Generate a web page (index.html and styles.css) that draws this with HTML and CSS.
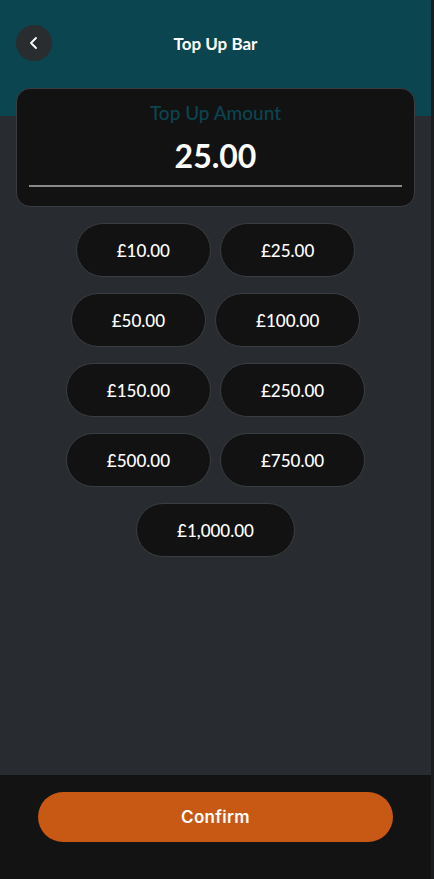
FILE: index.html
```html
<!DOCTYPE html>
<html lang="en">
<head>
    <meta charset="UTF-8">
    <meta name="viewport" content="width=device-width, initial-scale=1.0">
    <title>Top Up Bar</title>
    <link rel="stylesheet" href="styles.css">
</head>
<body>
    <div class="app">
        <div class="main">
            <header class="header">
                <button class="back" aria-label="Back">
                    <svg width="14" height="14" viewBox="0 0 14 14">
                        <path d="M9 2 L4 7 L9 12" fill="none" stroke="#fff" stroke-width="1.8" stroke-linecap="round" stroke-linejoin="round"/>
                    </svg>
                </button>
                <h1>Top Up Bar</h1>
            </header>

            <div class="amount-card">
                <div class="amount-label">Top Up Amount</div>
                <div class="amount-value" id="amount">25.00</div>
                <div class="amount-line"></div>
            </div>

            <!-- preset amounts -->
            <div class="presets">
                <button class="preset" data-value="10">£10.00</button>
                <button class="preset" data-value="25">£25.00</button>
                <button class="preset" data-value="50">£50.00</button>
                <button class="preset" data-value="100">£100.00</button>
                <button class="preset" data-value="150">£150.00</button>
                <button class="preset" data-value="250">£250.00</button>
                <button class="preset" data-value="500">£500.00</button>
                <button class="preset" data-value="750">£750.00</button>
                <button class="preset" data-value="1000">£1,000.00</button>
            </div>
        </div>

        <footer class="footer">
            <button class="confirm">Confirm</button>
        </footer>
    </div>

    <script>
        document.querySelectorAll('.preset').forEach(btn => {
            btn.addEventListener('click', function () {
                const v = Number(this.dataset.value);
                document.getElementById('amount').textContent = v.toFixed(2);
            });
        });
    </script>
</body>
</html>
```

FILE: styles.css
```css
html, body {
    margin: 0;
    padding: 0;
    height: 100%;
}

body {
    font-family: Lato, 'Noto Sans', sans-serif;
    background-color: #282c30;
    color: #fff;
}

button {
    font-family: inherit;
    cursor: pointer;
}

.app {
    display: flex;
    flex-direction: column;
    height: 100vh;
    box-sizing: border-box;
    border-right: 3px solid #1b1c1e;
}

.main {
    flex: 1;
    background: linear-gradient(to bottom, #0b4550 0, #0b4550 116px, #282c30 116px);
    padding: 25px 16px 0;
}

.header {
    display: flex;
    align-items: center;
    height: 36px;
    position: relative;
}

.back {
    width: 36px;
    height: 36px;
    border-radius: 50%;
    border: none;
    background-color: #2a2d30;
    display: flex;
    align-items: center;
    justify-content: center;
    padding: 0;
}

.header h1 {
    position: absolute;
    left: 0;
    right: 0;
    margin: 0;
    text-align: center;
    font-size: 17px;
    font-weight: 700;
    pointer-events: none;
}

.amount-card {
    margin-top: 27px;
    width: 399px;
    box-sizing: border-box;
    background-color: #121212;
    border: 1px solid #3a3d41;
    border-radius: 14px;
    padding: 13px 12px 19px;
    text-align: center;
}

.amount-label {
    color: #0b4550;
    font-size: 19px;
    font-weight: 500;
    line-height: 22px;
}

.amount-value {
    font-size: 32px;
    font-weight: 700;
    line-height: 40px;
    margin-top: 12px;
}

.amount-line {
    height: 2px;
    background-color: #8a8a8a;
    margin-top: 9px;
}

.presets {
    display: flex;
    flex-wrap: wrap;
    justify-content: center;
    gap: 16px 9px;
    margin: 16px auto 0;
    width: 310px;
}

.preset {
    height: 54px;
    padding: 0 40px;
    border-radius: 27px;
    border: 1px solid #3a3d41;
    background-color: #121212;
    color: #fff;
    font-size: 17px;
    font-weight: 500;
}

.preset:hover {
    background-color: #1a1a1a;
}

.footer {
    height: 104px;
    background-color: #131313;
    padding: 17px 38px 0;
    box-sizing: border-box;
}

.confirm {
    width: 100%;
    height: 50px;
    border: none;
    border-radius: 25px;
    background-color: #c85914;
    color: #fff;
    font-family: Inter, sans-serif;
    font-size: 17px;
    font-weight: 600;
    letter-spacing: 0.3px;
}
```
